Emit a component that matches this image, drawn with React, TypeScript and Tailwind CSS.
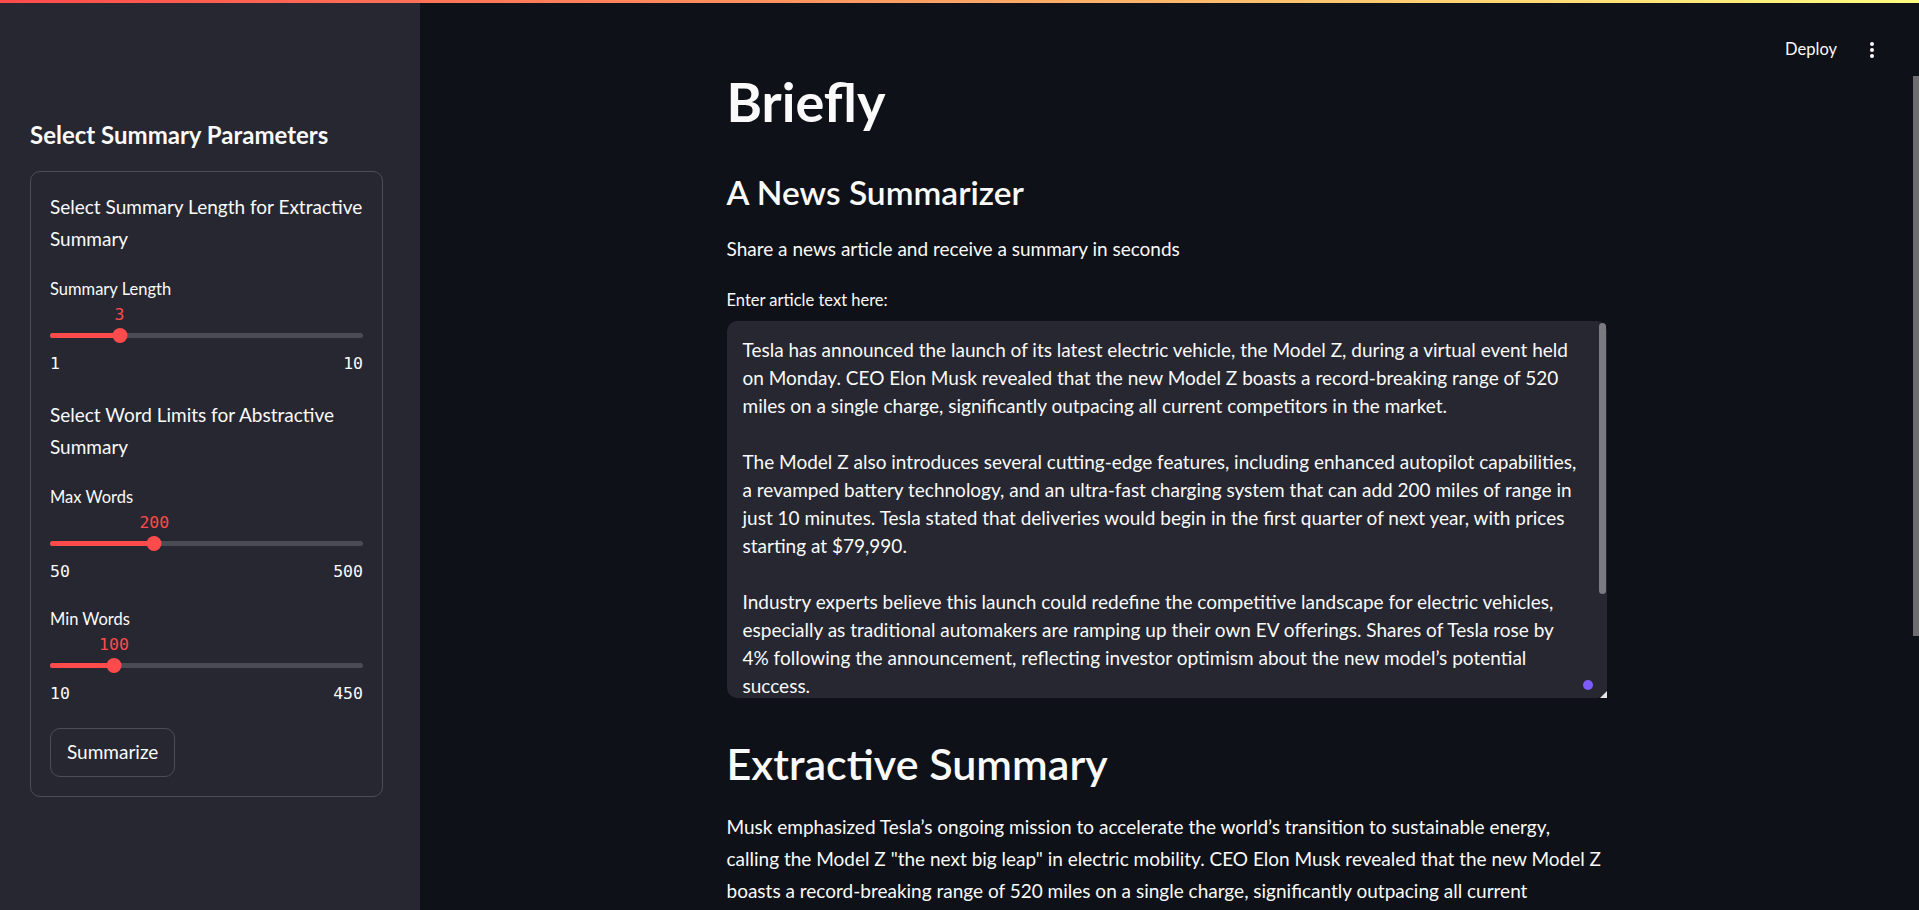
import React from "react";

const articleLines = [
  "Tesla has announced the launch of its latest electric vehicle, the Model Z, during a virtual event held",
  "on Monday. CEO Elon Musk revealed that the new Model Z boasts a record-breaking range of 520",
  "miles on a single charge, significantly outpacing all current competitors in the market.",
  "",
  "The Model Z also introduces several cutting-edge features, including enhanced autopilot capabilities,",
  "a revamped battery technology, and an ultra-fast charging system that can add 200 miles of range in",
  "just 10 minutes. Tesla stated that deliveries would begin in the first quarter of next year, with prices",
  "starting at $79,990.",
  "",
  "Industry experts believe this launch could redefine the competitive landscape for electric vehicles,",
  "especially as traditional automakers are ramping up their own EV offerings. Shares of Tesla rose by",
  "4% following the announcement, reflecting investor optimism about the new model’s potential",
  "success.",
];

const summaryLines = [
  "Musk emphasized Tesla’s ongoing mission to accelerate the world’s transition to sustainable energy,",
  'calling the Model Z "the next big leap" in electric mobility. CEO Elon Musk revealed that the new Model Z',
  "boasts a record-breaking range of 520 miles on a single charge, significantly outpacing all current",
  "competitors in the market.",
];

const Slider = ({ label, value, min, max }) => {
  const pct = ((value - min) / (max - min)) * 100;

  return (
    <div>
      <div className="text-[16.5px] leading-[26px]">{label}</div>
      <div className="relative h-[52px]">
        <div
          className="absolute top-[3px] -translate-x-1/2 font-['DejaVu_Sans_Mono',monospace] text-[16.5px] leading-[20px] text-[#ff4b4b]"
          style={{ left: `${pct}%` }}
        >
          {value}
        </div>
        <div className="absolute left-0 right-0 top-[31.5px] h-[5px] rounded-full bg-[#4a4b55]">
          <div className="h-full rounded-full bg-[#ff4b4b]" style={{ width: `${pct}%` }} />
        </div>
        <div
          className="absolute top-[26.5px] h-[15px] w-[15px] -translate-x-1/2 rounded-full bg-[#ff4b4b]"
          style={{ left: `${pct}%` }}
        />
      </div>
      <div className="flex justify-between font-['DejaVu_Sans_Mono',monospace] text-[16.5px] leading-[20px]">
        <span>{min}</span>
        <span>{max}</span>
      </div>
    </div>
  );
};

const App = () => {
  return (
    <div className="flex h-[910px] flex-col overflow-hidden bg-[#0e1117] font-['Lato',sans-serif] text-[#fafafa]">
      <div className="h-[3px] shrink-0 bg-[linear-gradient(90deg,#ff4b4b,#fffd80)]" />

      <div className="flex min-h-0 flex-1">
        {/* sidebar */}
        <aside className="w-[420px] shrink-0 bg-[#262730] pl-[30px] pr-[37px] pt-[118px]">
          <h2 className="whitespace-nowrap text-[24px] font-bold leading-[1.2]">
            Select Summary Parameters
          </h2>

          <div className="mt-[21px] rounded-[10px] border border-[#4b4c55] px-[19px] pb-[19px] pt-[19px]">
            <p className="whitespace-nowrap text-[19px] leading-[32px]">
              Select Summary Length for Extractive
              <br />
              Summary
            </p>
            <div className="mt-[21px]">
              <Slider label="Summary Length" value={3} min={1} max={10} />
            </div>

            <p className="mt-[25px] whitespace-nowrap text-[19px] leading-[32px]">
              Select Word Limits for Abstractive
              <br />
              Summary
            </p>
            <div className="mt-[21px]">
              <Slider label="Max Words" value={200} min={50} max={500} />
            </div>
            <div className="mt-[24px]">
              <Slider label="Min Words" value={100} min={10} max={450} />
            </div>

            <button className="mt-[24px] h-[49px] rounded-[10px] border border-[#4b4c55] px-[16px] text-[19px]">
              Summarize
            </button>
          </div>
        </aside>

        {/* main */}
        <main className="relative flex min-w-0 flex-1">
          <div className="absolute right-[38px] top-[32px] flex h-[29px] items-center gap-[26px]">
            <span className="text-[16.5px] leading-[29px]">Deploy</span>
            <svg width="18" height="18" viewBox="0 0 18 18" fill="#fafafa">
              <circle cx="9" cy="3" r="2" />
              <circle cx="9" cy="9" r="2" />
              <circle cx="9" cy="15" r="2" />
            </svg>
          </div>

          <div className="min-w-0 flex-1 overflow-hidden">
            <div className="mx-auto w-[880px] pt-[67px]">
              <h1 className="text-[54px] font-bold leading-[1.2]">Briefly</h1>
              <h3 className="mt-[37px] text-[33.5px] font-semibold leading-[1.2]">A News Summarizer</h3>
              <p className="mt-[22px] text-[19px] leading-[30.4px]">
                Share a news article and receive a summary in seconds
              </p>
              <div className="mt-[22.5px] text-[16.5px] leading-[26.4px]">Enter article text here:</div>

              <div className="relative mt-[7.5px] h-[377px] rounded-[10px] bg-[#262730]">
                <div className="h-full overflow-hidden whitespace-pre pl-[16px] pt-[15px] text-[19px] leading-[28px]">
                  {articleLines.map((line, i) => (
                    <div key={i}>{line || "\u00a0"}</div>
                  ))}
                </div>
                <div className="absolute right-[1px] top-[2px] h-[271px] w-[7px] rounded-full bg-[#7a7a80]" />
                <div className="absolute bottom-[8px] right-[14px] h-[10px] w-[10px] rounded-full bg-[#7d5cff]" />
                <svg className="absolute bottom-0 right-0" width="7" height="7" viewBox="0 0 7 7">
                  <path d="M7 0 L7 7 L0 7 Z" fill="#e6e6e6" />
                </svg>
              </div>

              <h2 className="mt-[40.5px] text-[43px] font-semibold leading-[1.2]">Extractive Summary</h2>
              <div className="mt-[21px] whitespace-nowrap text-[19px] leading-[32px]">
                {summaryLines.map((line, i) => (
                  <div key={i}>{line}</div>
                ))}
              </div>
            </div>
          </div>

          <div className="w-[6px] shrink-0">
            <div className="mt-[73px] h-[560px] bg-[#6e6e70]" />
          </div>
        </main>
      </div>
    </div>
  );
};

export default App;
